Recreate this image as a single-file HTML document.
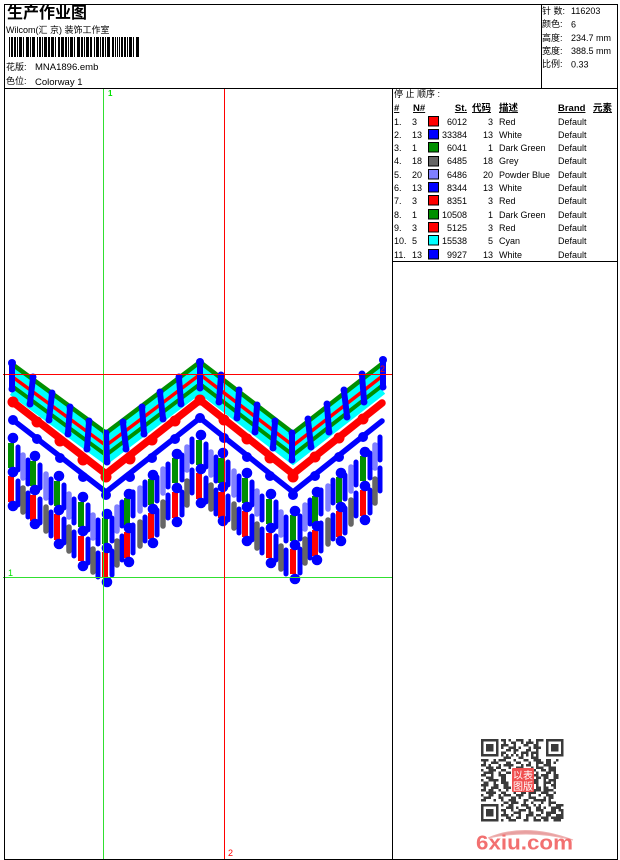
<!DOCTYPE html>
<html><head><meta charset="utf-8"><style>
html,body{margin:0;padding:0;background:#fff;width:620px;height:860px;overflow:hidden}
svg{display:block}
text{font-family:"Liberation Sans","WenQuanYi Zen Hei","Noto Sans CJK SC",sans-serif;font-size:9px;fill:#000}
.r{text-anchor:end}
.h{font-weight:bold;text-decoration:underline;font-size:9.5px}
.t{font-size:9.5px}
</style></head><body>
<svg width="620" height="860" viewBox="0 0 620 860" xmlns="http://www.w3.org/2000/svg">
<defs>
<path id="z" d="M12 364L106 433L200 362L293 433L383 363" fill="none" stroke-linejoin="miter"/>
<g id="D" fill="none" stroke-width="5.500" stroke-linecap="round">
 <path stroke="#00f" stroke-width="5" d="M18 447V470M28 460V484M40 465V488M51 479V503M64 485V508M74 499V523M88 505V530M98 520V544M18 481V505M28 493V517M40 499V523M51 512V536M64 519V543M74 532V556M88 539V563M98 553V577"/>
 <path stroke="#8080ff" d="M23 455V478M46 474V498M69 494V517M93 515V538"/>
 <path stroke="#666" d="M23 488V512M46 507V531M69 527V551M93 549V572"/>
 <path stroke="#008f00" stroke-width="6" stroke-linecap="butt" d="M11 443V468M33 461V486M57 481V506M81 502V527M105 518V544"/>
 <path stroke="#f00" stroke-width="6" stroke-linecap="butt" d="M11 476V502M33 495V521M57 514V540M81 536V561M105 552V577"/>
 <g fill="#00f" stroke="none">
  <circle cx="13" cy="438" r="5.300"/><circle cx="13" cy="472" r="5.300"/><circle cx="13" cy="506" r="5.300"/>
  <circle cx="35" cy="456" r="5.300"/><circle cx="35" cy="490" r="5.300"/><circle cx="35" cy="524" r="5.300"/>
  <circle cx="59" cy="476" r="5.300"/><circle cx="59" cy="510" r="5.300"/><circle cx="59" cy="544" r="5.300"/>
  <circle cx="83" cy="497" r="5.300"/><circle cx="83" cy="531" r="5.300"/><circle cx="83" cy="566" r="5.300"/>
  <circle cx="107" cy="514" r="5.300"/><circle cx="107" cy="548" r="5.300"/><circle cx="107" cy="582" r="5.300"/>
 </g>
</g>
<g id="A" fill="none" stroke-width="5.500" stroke-linecap="round">
 <path stroke="#00f" stroke-width="5" d="M112 518V541M122 502V526M133 492V516M145 482V505M157 477V501M168 464V487M182 455V480M192 439V462M112 551V575M122 536V560M133 525V553M145 517V541M157 510V535M168 495V518M182 492V515M192 470V493"/>
 <path stroke="#8080ff" d="M117 507V531M140 488V511M163 469V493M187 447V470"/>
 <path stroke="#666" d="M117 541V565M140 522V546M163 502V526M187 481V505"/>
 <path stroke="#008f00" stroke-width="6" stroke-linecap="butt" d="M127 498V525M151 479V505M175 458V483"/>
 <path stroke="#f00" stroke-width="6" stroke-linecap="butt" d="M127 532V558M151 513V539M175 492V518"/>
 <g fill="#00f" stroke="none">
  <circle cx="129" cy="494" r="5.300"/><circle cx="129" cy="528" r="5.300"/><circle cx="129" cy="562" r="5.300"/>
  <circle cx="153" cy="475" r="5.300"/><circle cx="153" cy="509" r="5.300"/><circle cx="153" cy="543" r="5.300"/>
  <circle cx="177" cy="454" r="5.300"/><circle cx="177" cy="488" r="5.300"/><circle cx="177" cy="522" r="5.300"/>
 </g>
</g>
</defs>

<!-- header text -->
<text x="7" y="18" style="font-size:16px;font-weight:bold">生产作业图</text>
<text x="6" y="33">Wilcom(汇 京) 装饰工作室</text>
<line x1="9" y1="47" x2="140" y2="47" stroke="#000" stroke-width="20" stroke-dasharray="1 1 2 1 2 1 1 1 3 1 1 2 3 1 1 1 3 2 1 1 2 1 1 1 3 1 2 1 3 1 1 2 2 1 3 1 2 1 1 1 3 1 1 2 3 1 2 1 1 1 3 1 2 2 1 1 3 1 1 1 2 1 1 1 3 2 2 1 1 1 1 1"/>
<text x="6" y="70">花版:</text><text x="35" y="70" class="t">MNA1896.emb</text>
<text x="6" y="84">色位:</text><text x="35" y="85" class="t">Colorway 1</text>

<text x="542" y="14">针 数:</text><text x="571" y="14">116203</text>
<text x="542" y="27">颜色:</text><text x="571" y="27.500">6</text>
<text x="542" y="41">高度:</text><text x="571" y="41">234.7 mm</text>
<text x="542" y="54">宽度:</text><text x="571" y="54">388.5 mm</text>
<text x="542" y="67">比例:</text><text x="571" y="67.500">0.33</text>

<!-- table -->
<text x="394" y="97">停 止 顺序 :</text>
<text x="394" y="111" class="h">#</text>
<text x="413" y="111" class="h">N#</text>
<text x="467" y="111" class="h r">St.</text>
<text x="472" y="111" class="h">代码</text>
<text x="499" y="111" class="h">描述</text>
<text x="558" y="111" class="h">Brand</text>
<text x="593" y="111" class="h">元素</text>

<g stroke="#000" stroke-width="1">
<rect x="428.500" y="116.500" width="10" height="9.500" fill="#f00"/>
<rect x="428.500" y="129.500" width="10" height="9.500" fill="#00f"/>
<rect x="428.500" y="142.500" width="10" height="9.500" fill="#008f00"/>
<rect x="428.500" y="156.500" width="10" height="9.500" fill="#666"/>
<rect x="428.500" y="169.500" width="10" height="9.500" fill="#8080ff"/>
<rect x="428.500" y="182.500" width="10" height="9.500" fill="#00f"/>
<rect x="428.500" y="195.500" width="10" height="9.500" fill="#f00"/>
<rect x="428.500" y="209.500" width="10" height="9.500" fill="#008f00"/>
<rect x="428.500" y="222.500" width="10" height="9.500" fill="#f00"/>
<rect x="428.500" y="235.500" width="10" height="9.500" fill="#0ff"/>
<rect x="428.500" y="249.500" width="10" height="9.500" fill="#00f"/>
</g>
<text x="394" y="125">1.</text><text x="412" y="125">3</text><text x="467" y="125" class="r">6012</text><text x="493" y="125" class="r">3</text><text x="499" y="125">Red</text><text x="558" y="125">Default</text>
<text x="394" y="138">2.</text><text x="412" y="138">13</text><text x="467" y="138" class="r">33384</text><text x="493" y="138" class="r">13</text><text x="499" y="138">White</text><text x="558" y="138">Default</text>
<text x="394" y="151">3.</text><text x="412" y="151">1</text><text x="467" y="151" class="r">6041</text><text x="493" y="151" class="r">1</text><text x="499" y="151">Dark Green</text><text x="558" y="151">Default</text>
<text x="394" y="164">4.</text><text x="412" y="164">18</text><text x="467" y="164" class="r">6485</text><text x="493" y="164" class="r">18</text><text x="499" y="164">Grey</text><text x="558" y="164">Default</text>
<text x="394" y="178">5.</text><text x="412" y="178">20</text><text x="467" y="178" class="r">6486</text><text x="493" y="178" class="r">20</text><text x="499" y="178">Powder Blue</text><text x="558" y="178">Default</text>
<text x="394" y="191">6.</text><text x="412" y="191">13</text><text x="467" y="191" class="r">8344</text><text x="493" y="191" class="r">13</text><text x="499" y="191">White</text><text x="558" y="191">Default</text>
<text x="394" y="204">7.</text><text x="412" y="204">3</text><text x="467" y="204" class="r">8351</text><text x="493" y="204" class="r">3</text><text x="499" y="204">Red</text><text x="558" y="204">Default</text>
<text x="394" y="218">8.</text><text x="412" y="218">1</text><text x="467" y="218" class="r">10508</text><text x="493" y="218" class="r">1</text><text x="499" y="218">Dark Green</text><text x="558" y="218">Default</text>
<text x="394" y="231">9.</text><text x="412" y="231">3</text><text x="467" y="231" class="r">5125</text><text x="493" y="231" class="r">3</text><text x="499" y="231">Red</text><text x="558" y="231">Default</text>
<text x="394" y="244">10.</text><text x="412" y="244">5</text><text x="467" y="244" class="r">15538</text><text x="493" y="244" class="r">5</text><text x="499" y="244">Cyan</text><text x="558" y="244">Default</text>
<text x="394" y="258">11.</text><text x="412" y="258">13</text><text x="467" y="258" class="r">9927</text><text x="493" y="258" class="r">13</text><text x="499" y="258">White</text><text x="558" y="258">Default</text>

<!-- embroidery -->
<g fill="none">
 <use href="#z" stroke="#0ff" stroke-width="7" transform="translate(0,6)"/>
 <use href="#z" stroke="#0ff" stroke-width="7" transform="translate(0,17)"/>
 <use href="#z" stroke="#0ff" stroke-width="7" transform="translate(0,28)"/>
 <use href="#z" stroke="#008f00" stroke-width="4.500"/>
 <use href="#z" stroke="#f00" stroke-width="3.500" transform="translate(0,12.500)"/>
 <use href="#z" stroke="#008f00" stroke-width="4" transform="translate(0,22)"/>
 <path stroke="#f00" stroke-width="7.500" stroke-linecap="round" d="M13 402L106 474L200 400L293 474L382 403"/>
 <path stroke="#00f" stroke-width="5.500" stroke-linecap="round" d="M13 420L106 492L200 418L293 492L382 421"/>
</g>
<g fill="#f00">
 <circle cx="13" cy="402" r="5.500"/><circle cx="37" cy="422" r="5.500"/><circle cx="60" cy="441" r="5.500"/><circle cx="83" cy="460" r="5.500"/><circle cx="106" cy="477" r="5.500"/><circle cx="130" cy="459" r="5.500"/><circle cx="152" cy="440" r="5.500"/><circle cx="175" cy="421" r="5.500"/><circle cx="200" cy="400" r="5.500"/><circle cx="224" cy="420" r="5.500"/><circle cx="247" cy="439" r="5.500"/><circle cx="270" cy="458" r="5.500"/><circle cx="293" cy="477" r="5.500"/><circle cx="315" cy="457" r="5.500"/><circle cx="339" cy="438" r="5.500"/><circle cx="363" cy="419" r="5.500"/>
</g>
<g fill="#00f">
 <circle cx="13" cy="420" r="5"/><circle cx="37" cy="439" r="5"/><circle cx="60" cy="458" r="5"/><circle cx="83" cy="477" r="5"/><circle cx="106" cy="495" r="5"/><circle cx="130" cy="477" r="5"/><circle cx="152" cy="458" r="5"/><circle cx="175" cy="439" r="5"/><circle cx="200" cy="418" r="5"/><circle cx="224" cy="438" r="5"/><circle cx="247" cy="457" r="5"/><circle cx="270" cy="476" r="5"/><circle cx="293" cy="495" r="5"/><circle cx="315" cy="476" r="5"/><circle cx="339" cy="457" r="5"/><circle cx="363" cy="437" r="5"/>
</g>
<use href="#D"/><use href="#A"/>
<use href="#D" transform="translate(188,-3)"/><use href="#A" transform="translate(188,-2)"/>
<path fill="none" stroke="#00f" stroke-width="6" stroke-linecap="round" d="M12 365V388M33 378L30 403M52 394L49 419M70 408L68 433M89 422L87 448M106 434L107 461M123 423L126 448M142 408L144 433M160 393L163 418M179 378L181 403M200 363V387M221 376L219 401M239 391L237 417M257 406L255 431M275 422L273 447M292 434V459M308 420L311 446M327 405L329 431M344 391L347 416M362 375L364 401M383 361V386"/>
<g fill="#00f">
 <circle cx="12" cy="363" r="4"/><circle cx="12" cy="389" r="3.500"/><circle cx="33" cy="377" r="3.500"/><circle cx="30" cy="404" r="3.500"/><circle cx="52" cy="393" r="3.500"/><circle cx="49" cy="420" r="3.500"/><circle cx="70" cy="407" r="3.500"/><circle cx="68" cy="434" r="3.500"/><circle cx="89" cy="421" r="3.500"/><circle cx="87" cy="449" r="3.500"/><circle cx="106" cy="433" r="3.500"/><circle cx="107" cy="462" r="3.500"/><circle cx="123" cy="422" r="3.500"/><circle cx="126" cy="449" r="3.500"/><circle cx="142" cy="407" r="3.500"/><circle cx="144" cy="434" r="3.500"/><circle cx="160" cy="392" r="3.500"/><circle cx="163" cy="419" r="3.500"/><circle cx="179" cy="377" r="3.500"/><circle cx="181" cy="404" r="3.500"/><circle cx="200" cy="362" r="4"/><circle cx="200" cy="388" r="3.500"/><circle cx="221" cy="375" r="3.500"/><circle cx="219" cy="402" r="3.500"/><circle cx="239" cy="390" r="3.500"/><circle cx="237" cy="418" r="3.500"/><circle cx="257" cy="405" r="3.500"/><circle cx="255" cy="432" r="3.500"/><circle cx="275" cy="421" r="3.500"/><circle cx="273" cy="448" r="3.500"/><circle cx="292" cy="433" r="3.500"/><circle cx="292" cy="460" r="3.500"/><circle cx="308" cy="419" r="3.500"/><circle cx="311" cy="447" r="3.500"/><circle cx="327" cy="404" r="3.500"/><circle cx="329" cy="432" r="3.500"/><circle cx="344" cy="390" r="3.500"/><circle cx="347" cy="417" r="3.500"/><circle cx="362" cy="374" r="3.500"/><circle cx="364" cy="402" r="3.500"/><circle cx="383" cy="360" r="4"/><circle cx="383" cy="387" r="3.500"/>
</g>

<!-- guides -->
<path stroke="#30e030" d="M103.500 89V859M3 577.500H392"/>
<path stroke="#f00" d="M224.500 89V859M3 374.500H392"/>
<text x="108" y="96" style="fill:#00e000;font-weight:bold;font-size:8px">1</text>
<text x="8" y="576" style="fill:#00e000;font-size:9px">1</text>
<text x="228" y="856" style="fill:#f00;font-size:9px">2</text>
<text x="380" y="372" style="fill:#f00;font-size:9px">2</text>

<!-- frame -->
<path fill="none" stroke="#000" d="M4.500 4.500H617.500V859.500H4.500ZM4.500 88.500H617.500M392.500 88.500V859.500M541.500 4.500V88.500M392.500 261.500H617.500"/>

<!-- QR -->
<g transform="translate(481,739) scale(2.500)" fill="none" stroke="#3a3a3a" stroke-width="1">
 <path d="M.5 .5h6v6h-6zM26.500 .5h6v6h-6zM.5 26.500h6v6h-6z"/>
 <path stroke-width="3" d="M2 3.500h3M28 3.500h3M2 29.500h3"/>
 <path d="M8 .5h2m1 0h1m2 0h3m2 0h1m2 0h3M9 1.500h1m2 0h2m2 0h1m1 0h3m1 0h1M8 2.500h3m2 0h1m3 0h2m2 0h2M8 3.500h1m2 0h3m1 0h1m3 0h1m1 0h3M10 4.500h2m1 0h2m3 0h2m2 0h1M8 5.500h2m3 0h1m2 0h3m1 0h3M8 6.500h1m1 0h1m1 0h1m1 0h1m1 0h1m1 0h1m1 0h1m1 0h1"/>
 <path d="M9 7.500h3m3 0h2m3 0h3M0 8.500h3m2 0h1m1 0h3m3 0h1m3 0h2m2 0h3m2 0h2m2 0h1M1 9.500h1m2 0h3m3 0h2m2 0h2m3 0h1m2 0h3m1 0h2m1 0h1M0 10.500h2m1 0h1m3 0h1m1 0h4m3 0h1m1 0h2m2 0h1m2 0h3M2 11.500h3m1 0h2m3 0h1m2 0h3m3 0h1m1 0h3m2 0h3M0 12.500h1m2 0h3m2 0h2m10 0h2m2 0h2m1 0h3M1 13.500h4m2 0h1m2 0h2m7 0h2m1 0h1m3 0h2m1 0h1M0 14.500h2m2 0h1m2 0h3m10 0h3m1 0h3m2 0h2M2 15.500h3m3 0h2m10 0h1m1 0h2m1 0h2m2 0h2M0 16.500h1m2 0h4m1 0h2m10 0h3m2 0h1m1 0h3M1 17.500h2m2 0h1m2 0h3m10 0h2m2 0h3m1 0h1M0 18.500h3m2 0h2m2 0h2m9 0h1m1 0h1m2 0h1m2 0h2M1 19.500h1m2 0h3m2 0h3m1 0h1m4 0h2m2 0h2m1 0h2m2 0h1M0 20.500h2m1 0h2m2 0h1m2 0h1m2 0h3m3 0h1m1 0h3m1 0h4M2 21.500h4m2 0h2m3 0h1m2 0h2m1 0h3m2 0h3m2 0h1M0 22.500h1m2 0h2m2 0h1m1 0h3m2 0h3m2 0h1m3 0h1m2 0h3M1 23.500h3m3 0h2m3 0h2m1 0h1m3 0h3m3 0h1m1 0h2M0 24.500h2m3 0h1m2 0h1m2 0h3m3 0h2m2 0h5m1 0h1"/>
 <path d="M9 25.500h2m1 0h3m2 0h1m2 0h1m3 0h1m2 0h3M8 26.500h1m2 0h2m3 0h3m2 0h1m1 0h1m3 0h1m2 0h3M10 27.500h3m1 0h1m3 0h2m2 0h2m1 0h1m2 0h4M8 28.500h2m2 0h1m2 0h3m1 0h1m2 0h3m3 0h2m1 0h2M9 29.500h1m3 0h3m3 0h2m3 0h1m1 0h4m2 0h1M8 30.500h3m1 0h1m2 0h1m2 0h3m1 0h2m2 0h2m2 0h3M10 31.500h2m2 0h2m2 0h1m2 0h1m2 0h3m1 0h5M8 32.500h1m2 0h3m3 0h2m2 0h3m1 0h2m2 0h3"/>
</g>
<rect x="512" y="768" width="22" height="24" rx="1" fill="#f05050"/>
<text x="513" y="779" style="fill:#fff;font-size:10px">以</text>
<text x="523" y="779" style="fill:#fff;font-size:10px">表</text>
<text x="513" y="790" style="fill:#fff;font-size:10px">图</text>
<text x="523" y="790" style="fill:#fff;font-size:10px">版</text>

<!-- logo -->
<path d="M488 838Q525 822 573 840Q530 829 488 838Z" fill="#e8a0a0" stroke="#eeb0b0" stroke-width="1"/>
<text x="476" y="849.500" textLength="97" lengthAdjust="spacingAndGlyphs" style="font-size:20px;font-weight:bold;fill:#f27070">6xiu.com</text>
</svg>
</body></html>
